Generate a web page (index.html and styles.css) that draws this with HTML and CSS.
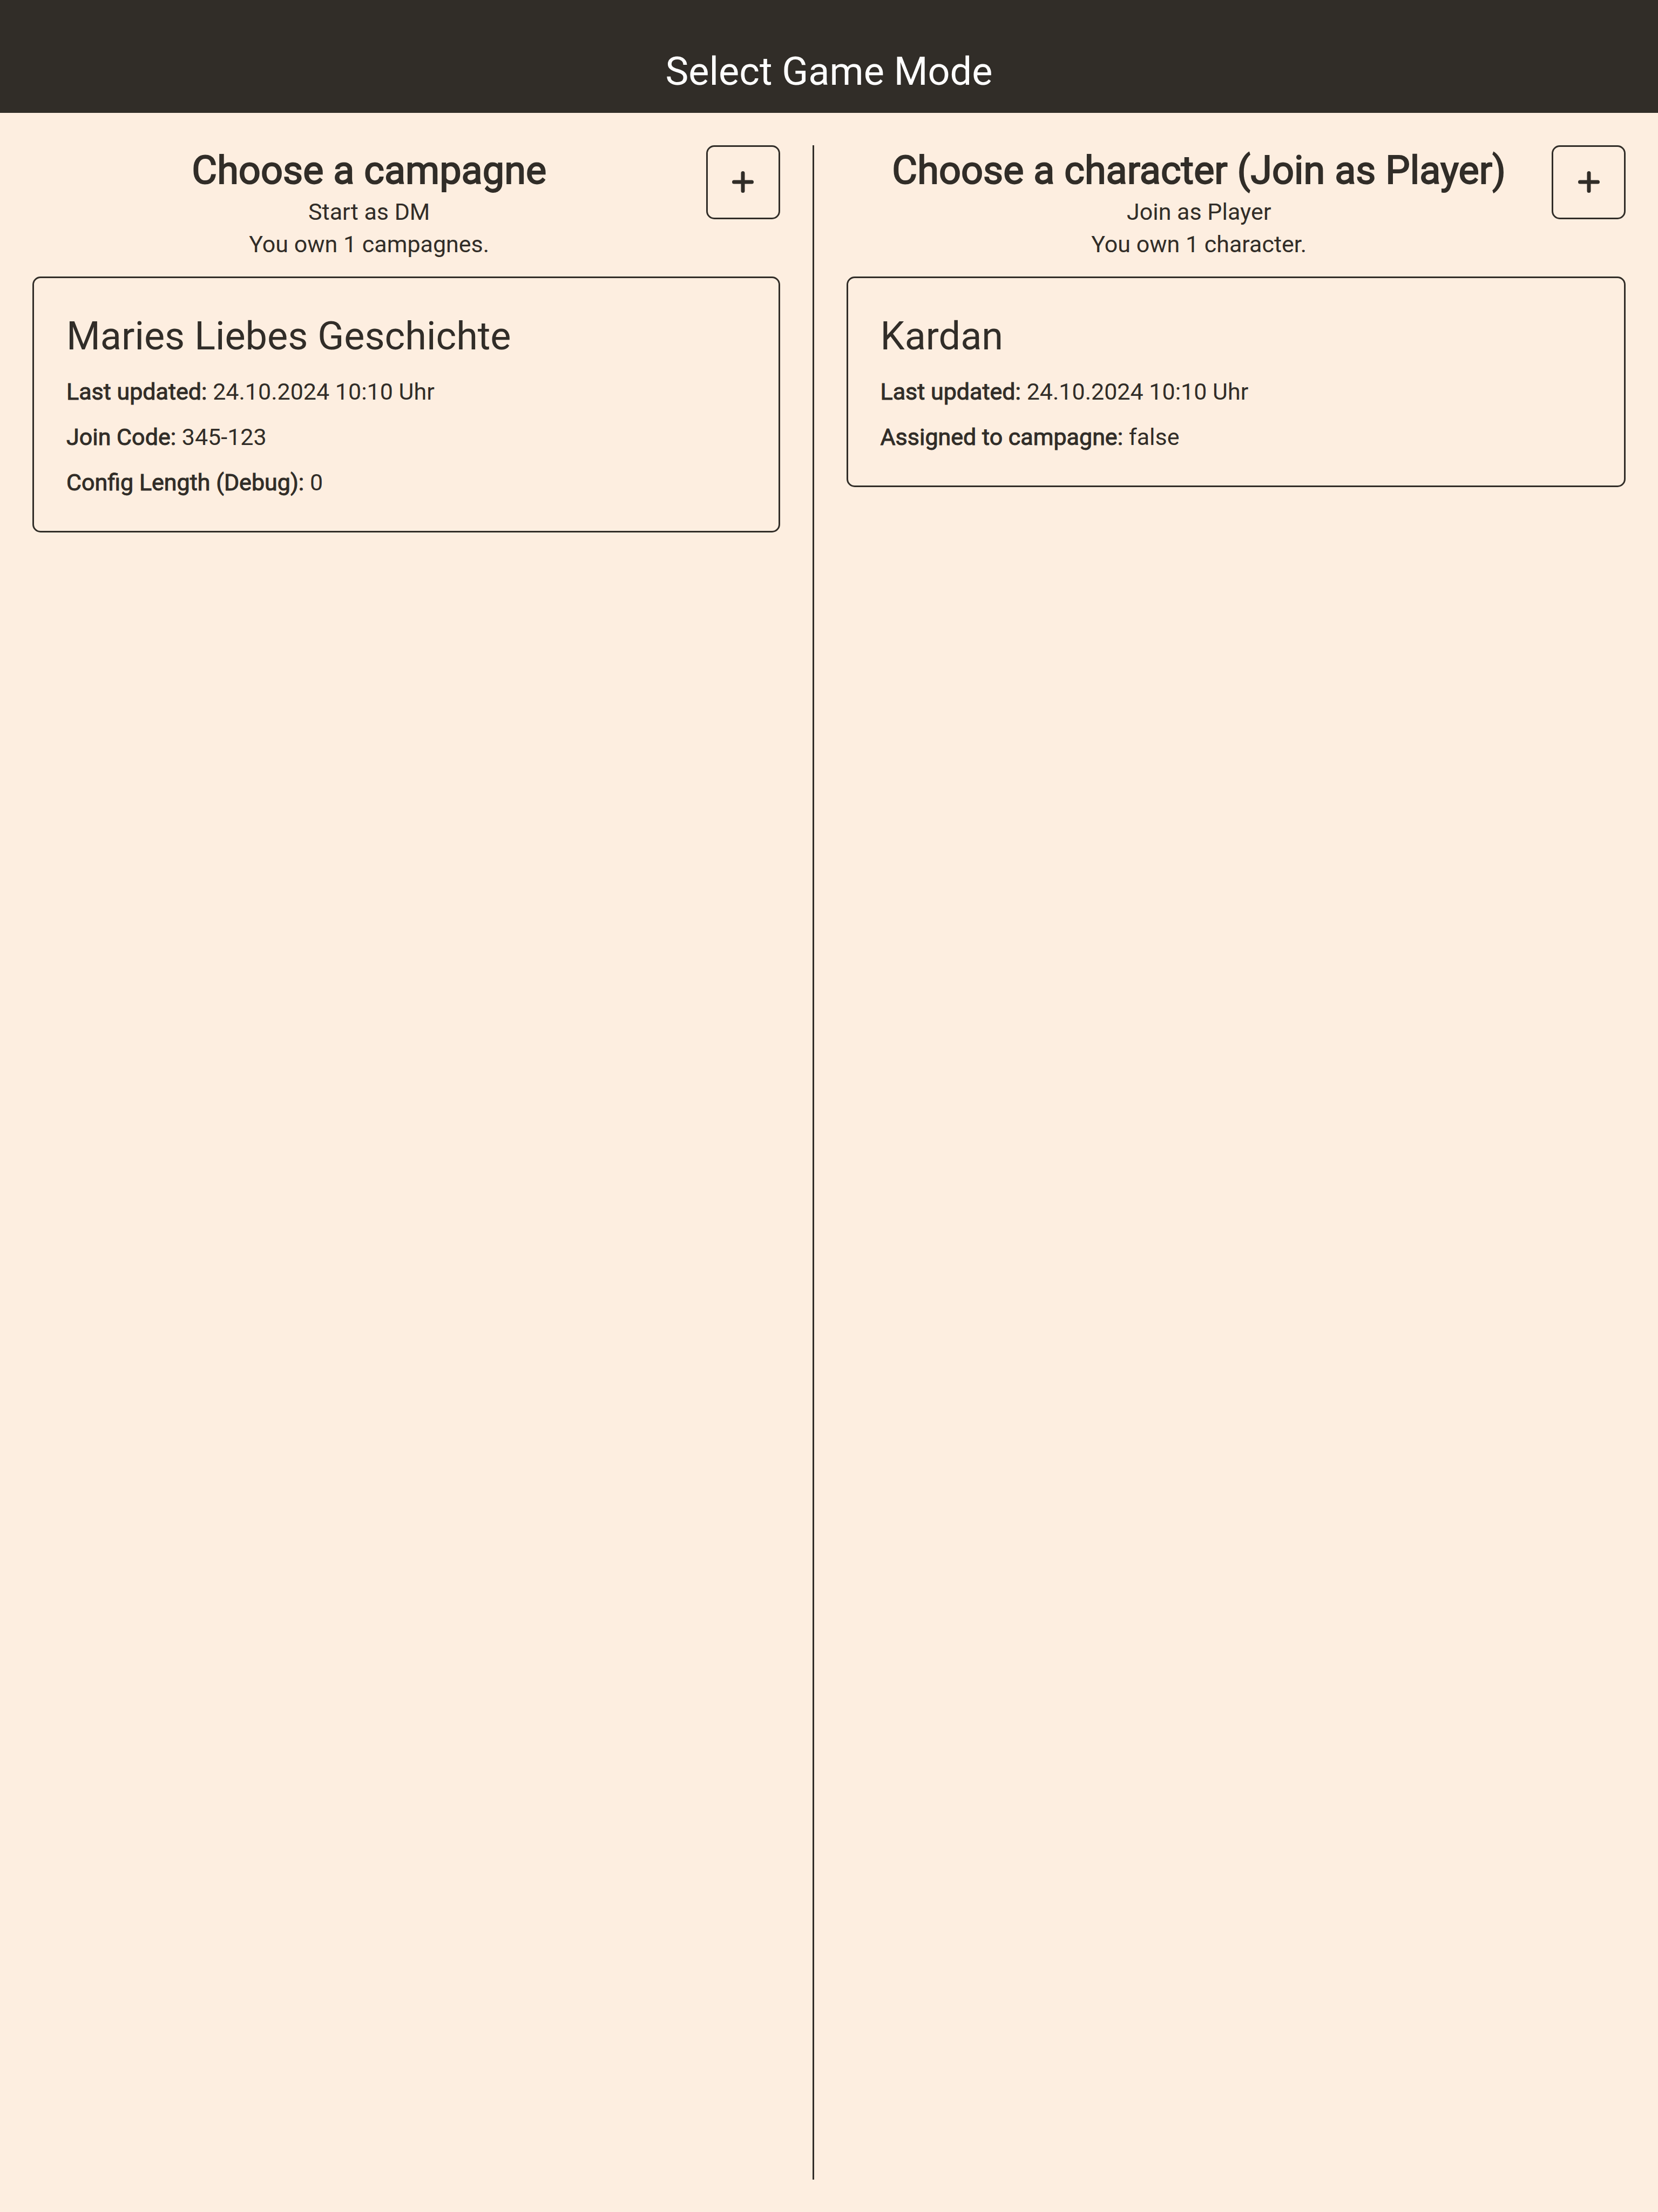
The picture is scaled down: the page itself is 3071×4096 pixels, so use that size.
FILE: index.html
```html
<!DOCTYPE html>
<html lang="en">
<head>
  <meta charset="utf-8">
  <meta name="viewport" content="width=device-width, initial-scale=1">
  <title>Select Game Mode</title>
  <link rel="stylesheet" href="styles.css">
</head>
<body>
  <header class="app-bar">
    <h1 class="app-bar-title">Select Game Mode</h1>
  </header>
  <main class="modes">
    <section class="mode">
      <div class="mode-head">
        <div class="mode-intro">
          <h2 class="mode-title">Choose a campagne</h2>
          <p>Start as DM</p>
          <p>You own 1 campagnes.</p>
        </div>
        <button class="add-button" type="button" aria-label="Add campagne">
          <svg class="add-icon" viewBox="0 0 72 72" aria-hidden="true"><path d="M36 18.500V51.500M19.500 35H52.500"/></svg>
        </button>
      </div>
      <article class="card">
        <h3 class="card-title">Maries Liebes Geschichte</h3>
        <p><b class="label">Last updated:</b> 24.10.2024 10:10 Uhr</p>
        <p><b class="label">Join Code:</b> 345-123</p>
        <p><b class="label">Config Length (Debug):</b> 0</p>
      </article>
    </section>
    <div class="divider"></div>
    <section class="mode">
      <div class="mode-head">
        <div class="mode-intro">
          <h2 class="mode-title">Choose a character (Join as Player)</h2>
          <p>Join as Player</p>
          <p>You own 1 character.</p>
        </div>
        <button class="add-button" type="button" aria-label="Add character">
          <svg class="add-icon" viewBox="0 0 72 72" aria-hidden="true"><path d="M36 18.500V51.500M19.500 35H52.500"/></svg>
        </button>
      </div>
      <article class="card">
        <h3 class="card-title">Kardan</h3>
        <p><b class="label">Last updated:</b> 24.10.2024 10:10 Uhr</p>
        <p><b class="label">Assigned to campagne:</b> false</p>
      </article>
    </section>
  </main>
</body>
</html>
```
FILE: styles.css
```css
:root {
  --ink: #312d28;
  --paper: #fdeee0;
}

* {
  box-sizing: border-box;
  margin: 0;
}

body {
  display: flex;
  flex-direction: column;
  min-height: 100vh;
  background: var(--paper);
  color: var(--ink);
  font: 400 43px/60px Roboto, sans-serif;
}

.app-bar {
  padding: 85px 60px 28px;
  background: var(--ink);
  color: #fff;
  text-align: center;
}

.app-bar-title,
.mode-title,
.card-title {
  font-size: 72px;
  font-weight: 400;
  line-height: 96px;
}

.modes {
  flex: 1;
  display: grid;
  grid-template-columns: calc(50% - 91px) 3px 1fr;
  gap: 60px;
  padding: 60px;
}

.divider {
  background: var(--ink);
}

.mode-head {
  display: flex;
  align-items: flex-start;
  min-height: 243px;
}

.mode-intro {
  flex: 1;
  text-align: center;
}

.mode-title {
  line-height: 93px;
  -webkit-text-stroke: 2px currentColor;
}

.add-button {
  display: grid;
  place-items: center;
  width: 137px;
  height: 137px;
  padding: 0;
  border: 3px solid var(--ink);
  border-radius: 15px;
  background: none;
  color: inherit;
}

.add-icon {
  width: 72px;
  height: 72px;
  fill: none;
  stroke: currentColor;
  stroke-width: 7px;
  stroke-linecap: round;
}

.card {
  display: grid;
  gap: 24px;
  padding: 60px;
  border: 3px solid var(--ink);
  border-radius: 15px;
}

.label {
  font-weight: 400;
  -webkit-text-stroke: 1px currentColor;
}
```
